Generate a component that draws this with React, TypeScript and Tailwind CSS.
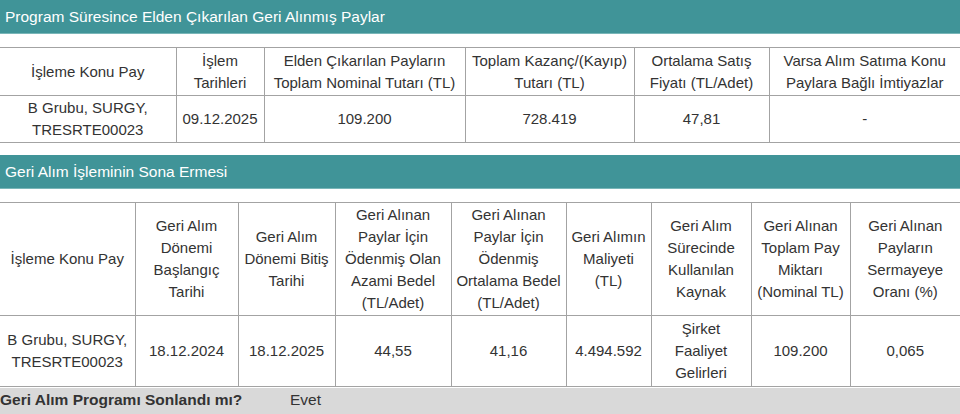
import React from "react";

const th = "border-x border-[#a3a3a3] first:border-l-0 last:border-r-0 px-1 py-0 text-center font-normal align-middle";
const td = "border-x border-[#a3a3a3] first:border-l-0 last:border-r-0 px-1 text-center align-middle";

function SectionTitle({ children }: { children: React.ReactNode }) {
  return (
    <div className="h-[34px] bg-[#409498] border-b border-[#79b6b8] flex items-center px-[5px] text-white text-[15.5px]">
      {children}
    </div>
  );
}

export default function App() {
  const soldCols = [176, 88, 201, 169, 135, 191];
  const endCols = [135, 103, 97, 116, 115, 85, 100, 99, 110];

  return (
    <div className="w-[960px] h-[414px] overflow-hidden bg-white text-[#333] text-[15px] leading-[22px]" style={{ fontFamily: '"Liberation Sans", Arial, sans-serif' }}>
      <SectionTitle>Program Süresince Elden Çıkarılan Geri Alınmış Paylar</SectionTitle>

      {/* Elden çıkarılan paylar */}
      <table className="mt-[13px] w-full table-fixed border-collapse border-y border-[#a3a3a3]">
        <colgroup>
          {soldCols.map((w, i) => (
            <col key={i} style={{ width: w }} />
          ))}
        </colgroup>
        <thead>
          <tr className="h-[48px] border-b border-[#a3a3a3]">
            <th className={th}>İşleme Konu Pay</th>
            <th className={th}>İşlem<br />Tarihleri</th>
            <th className={th}>Elden Çıkarılan Payların<br />Toplam Nominal Tutarı (TL)</th>
            <th className={th}>Toplam Kazanç/(Kayıp)<br />Tutarı (TL)</th>
            <th className={th}>Ortalama Satış<br />Fiyatı (TL/Adet)</th>
            <th className={th}>Varsa Alım Satıma Konu<br />Paylara Bağlı İmtiyazlar</th>
          </tr>
        </thead>
        <tbody>
          <tr className="h-[47px]">
            <td className={td}>B Grubu, SURGY,<br />TRESRTE00023</td>
            <td className={td}>09.12.2025</td>
            <td className={td}>109.200</td>
            <td className={td}>728.419</td>
            <td className={td}>47,81</td>
            <td className={td}>-</td>
          </tr>
        </tbody>
      </table>

      <div className="mt-[12px]">
        <SectionTitle>Geri Alım İşleminin Sona Ermesi</SectionTitle>
      </div>

      {/* Geri alım sona erme */}
      <table className="mt-[13px] w-full table-fixed border-collapse border-y border-[#a3a3a3]">
        <colgroup>
          {endCols.map((w, i) => (
            <col key={i} style={{ width: w }} />
          ))}
        </colgroup>
        <thead>
          <tr className="h-[113px] border-b border-[#a3a3a3]">
            <th className={th}>İşleme Konu Pay</th>
            <th className={th}>Geri Alım<br />Dönemi<br />Başlangıç<br />Tarihi</th>
            <th className={th}>Geri Alım<br />Dönemi Bitiş<br />Tarihi</th>
            <th className={th}>Geri Alınan<br />Paylar İçin<br />Ödenmiş Olan<br />Azami Bedel<br />(TL/Adet)</th>
            <th className={th}>Geri Alınan<br />Paylar İçin<br />Ödenmiş<br />Ortalama Bedel<br />(TL/Adet)</th>
            <th className={th}>Geri Alımın<br />Maliyeti<br />(TL)</th>
            <th className={th}>Geri Alım<br />Sürecinde<br />Kullanılan<br />Kaynak</th>
            <th className={th}>Geri Alınan<br />Toplam Pay<br />Miktarı<br />(Nominal TL)</th>
            <th className={th}>Geri Alınan<br />Payların<br />Sermayeye<br />Oranı (%)</th>
          </tr>
        </thead>
        <tbody>
          <tr className="h-[71px]">
            <td className={td}>B Grubu, SURGY,<br />TRESRTE00023</td>
            <td className={td}>18.12.2024</td>
            <td className={td}>18.12.2025</td>
            <td className={td}>44,55</td>
            <td className={td}>41,16</td>
            <td className={td}>4.494.592</td>
            <td className={td}>Şirket<br />Faaliyet<br />Gelirleri</td>
            <td className={td}>109.200</td>
            <td className={td}>0,065</td>
          </tr>
        </tbody>
      </table>

      <div className="mt-px h-[27px] bg-[#d9d9d9] flex items-center text-[15.5px] pb-[3px]">
        <span className="w-[290px] font-bold">Geri Alım Programı Sonlandı mı?</span>
        <span>Evet</span>
      </div>
    </div>
  );
}
